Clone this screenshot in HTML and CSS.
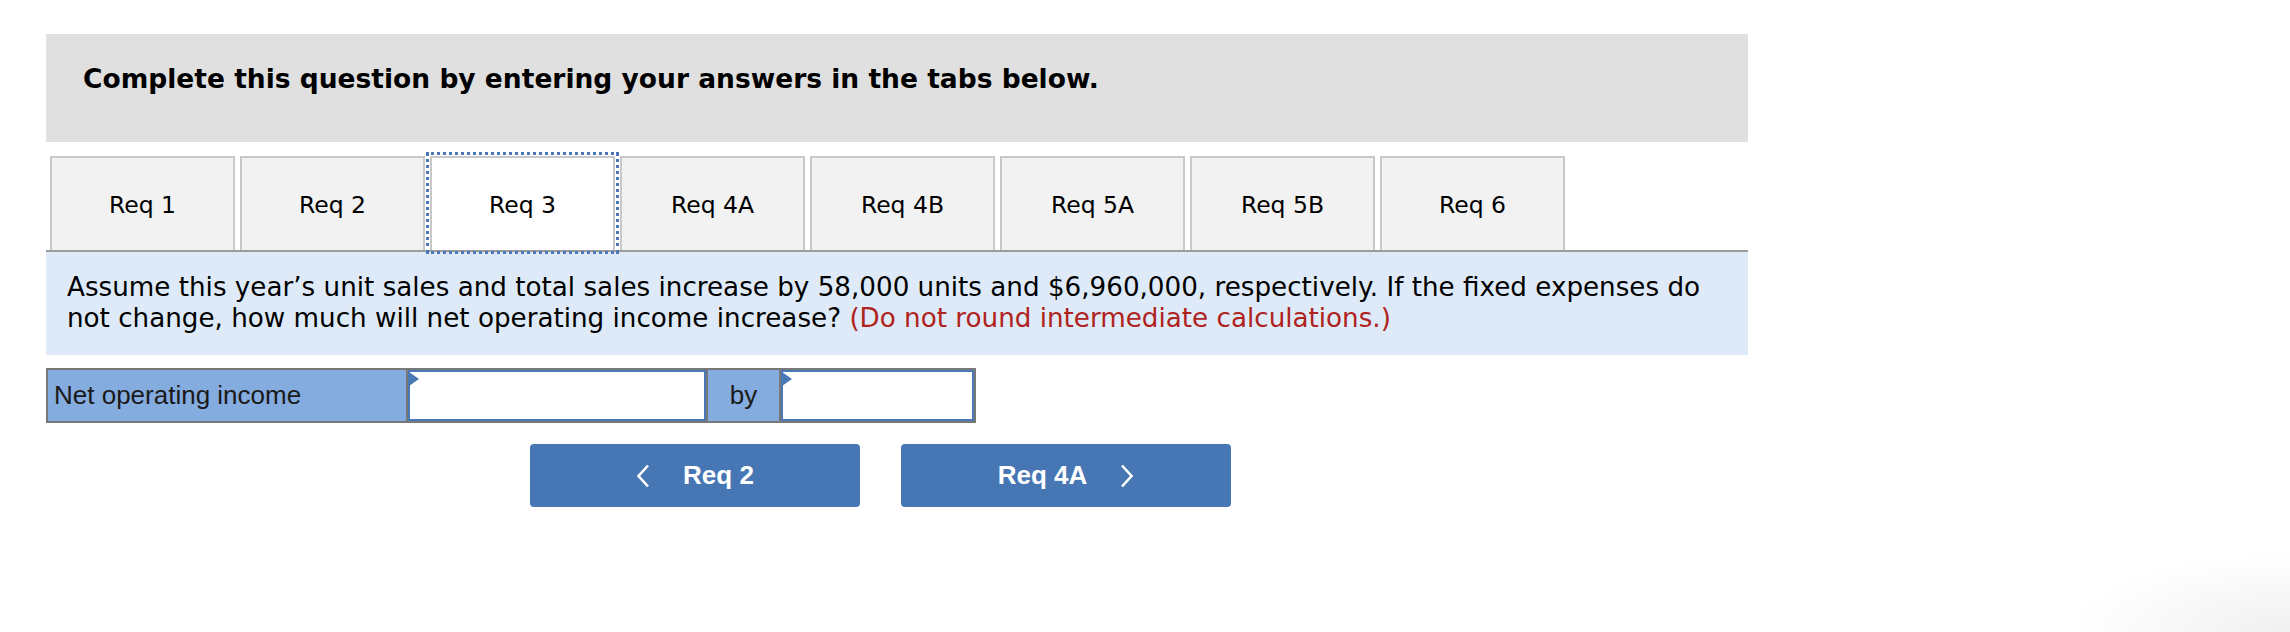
FILE: index.html
```html
<!DOCTYPE html>
<html lang="en">
<head>
<meta charset="utf-8">
<title>Req 3</title>
<link rel="stylesheet" href="styles.css">
</head>
<body>
<div class="page">
  <div class="instructions">
    <h2 class="instructions-title">Complete this question by entering your answers in the tabs below.</h2>
  </div>

  <div class="tabs">
    <div class="tab">Req 1</div>
    <div class="tab">Req 2</div>
    <div class="tab active">Req 3</div>
    <div class="tab">Req 4A</div>
    <div class="tab">Req 4B</div>
    <div class="tab">Req 5A</div>
    <div class="tab">Req 5B</div>
    <div class="tab">Req 6</div>
  </div>

  <div class="question">
    <p class="question-text">Assume this year’s unit sales and total sales increase by 58,000 units and $6,960,000, respectively. If the fixed expenses do not change, how much will net operating income increase? <span class="note">(Do not round intermediate calculations.)</span></p>
  </div>

  <table class="answer">
    <tr>
      <td class="cell-label">Net operating income</td>
      <td class="cell-input cell-input-wide"><div class="input-box"></div></td>
      <td class="cell-label cell-by">by</td>
      <td class="cell-input cell-input-narrow"><div class="input-box"></div></td>
    </tr>
  </table>

  <div class="nav">
    <button class="nav-btn" type="button">
      <svg class="chev" width="14" height="24" viewBox="0 0 14 24"><polyline points="12,1.5 2.5,12 12,22.5" fill="none" stroke="#fff" stroke-width="2.6"/></svg>
      <span>Req 2</span>
    </button>
    <button class="nav-btn" type="button">
      <span>Req 4A</span>
      <svg class="chev" width="14" height="24" viewBox="0 0 14 24"><polyline points="2,1.5 11.5,12 2,22.5" fill="none" stroke="#fff" stroke-width="2.6"/></svg>
    </button>
  </div>
</div>
</body>
</html>
```

FILE: styles.css
```css
html, body {
  margin: 0;
  padding: 0;
}

body {
  background: #ffffff radial-gradient(ellipse 220px 80px at 100% 100%, #f0f0f0 0%, rgba(255,255,255,0) 100%) no-repeat;
  min-height: 632px;
  font-family: "DejaVu Sans", Verdana, sans-serif;
  color: #000;
}

.page {
  padding: 34px 0 0 46px;
  width: 1702px;
}

.instructions {
  background: #e0e0e0;
  height: 108px;
  box-sizing: border-box;
  padding: 29px 0 0 37px;
}

.instructions-title {
  margin: 0;
  font-size: 26.5px;
  line-height: 32px;
  font-weight: bold;
}

.tabs {
  display: flex;
  align-items: flex-end;
  gap: 5px;
  margin-top: 14px;
  padding-left: 4px;
  border-bottom: 2px solid #9c9c9c;
}

.tab {
  width: 185px;
  height: 94px;
  box-sizing: border-box;
  border: 2px solid #c8c8c8;
  border-bottom: none;
  background: #f2f2f2;
  display: flex;
  align-items: center;
  justify-content: center;
  font-size: 23.5px;
  padding-top: 2px;
}

.tab.active {
  background: #ffffff;
  outline: 3px dotted #4a78b6;
  outline-offset: 1px;
}

.question {
  background: #deeaf7;
  padding: 20px 21px 21px 21px;
}

.question-text {
  margin: 0;
  font-size: 26.2px;
  line-height: 31px;
}

.note {
  color: #b0221e;
}

.answer {
  margin-top: 13px;
  border-collapse: collapse;
  border: 2px solid #787878;
  font-family: "Liberation Sans", Arial, sans-serif;
  font-size: 26px;
  color: #1a1a1a;
}

.answer td {
  padding: 0;
  height: 51px;
  border: 2px solid #787878;
}

.cell-label {
  background: #84acdf;
  width: 352px;
  padding-left: 6px !important;
  vertical-align: middle;
}

.cell-by {
  width: 71px;
  padding-left: 0 !important;
  text-align: center;
}

.cell-input {
  position: relative;
  background: #fff;
}

.cell-input-wide { width: 298px; }
.cell-input-narrow { width: 193px; }

.input-box {
  box-sizing: border-box;
  height: 51px;
  border: 2px solid #4a78b6;
  background: #fff;
}

.cell-input::before {
  content: "";
  position: absolute;
  left: 1px;
  top: 2px;
  width: 0;
  height: 0;
  border-top: 7px solid transparent;
  border-bottom: 7px solid transparent;
  border-left: 10px solid #4a78b6;
}

.nav {
  display: flex;
  gap: 41px;
  margin-top: 21px;
  padding-left: 484px;
}

.nav-btn {
  width: 330px;
  height: 63px;
  border: none;
  border-radius: 4px;
  background: #4776b4;
  color: #fff;
  font-family: "Liberation Sans", Arial, sans-serif;
  font-weight: bold;
  font-size: 26px;
  display: flex;
  align-items: center;
  justify-content: center;
  gap: 33px;
  padding: 0;
}

.chev {
  display: block;
}
```
